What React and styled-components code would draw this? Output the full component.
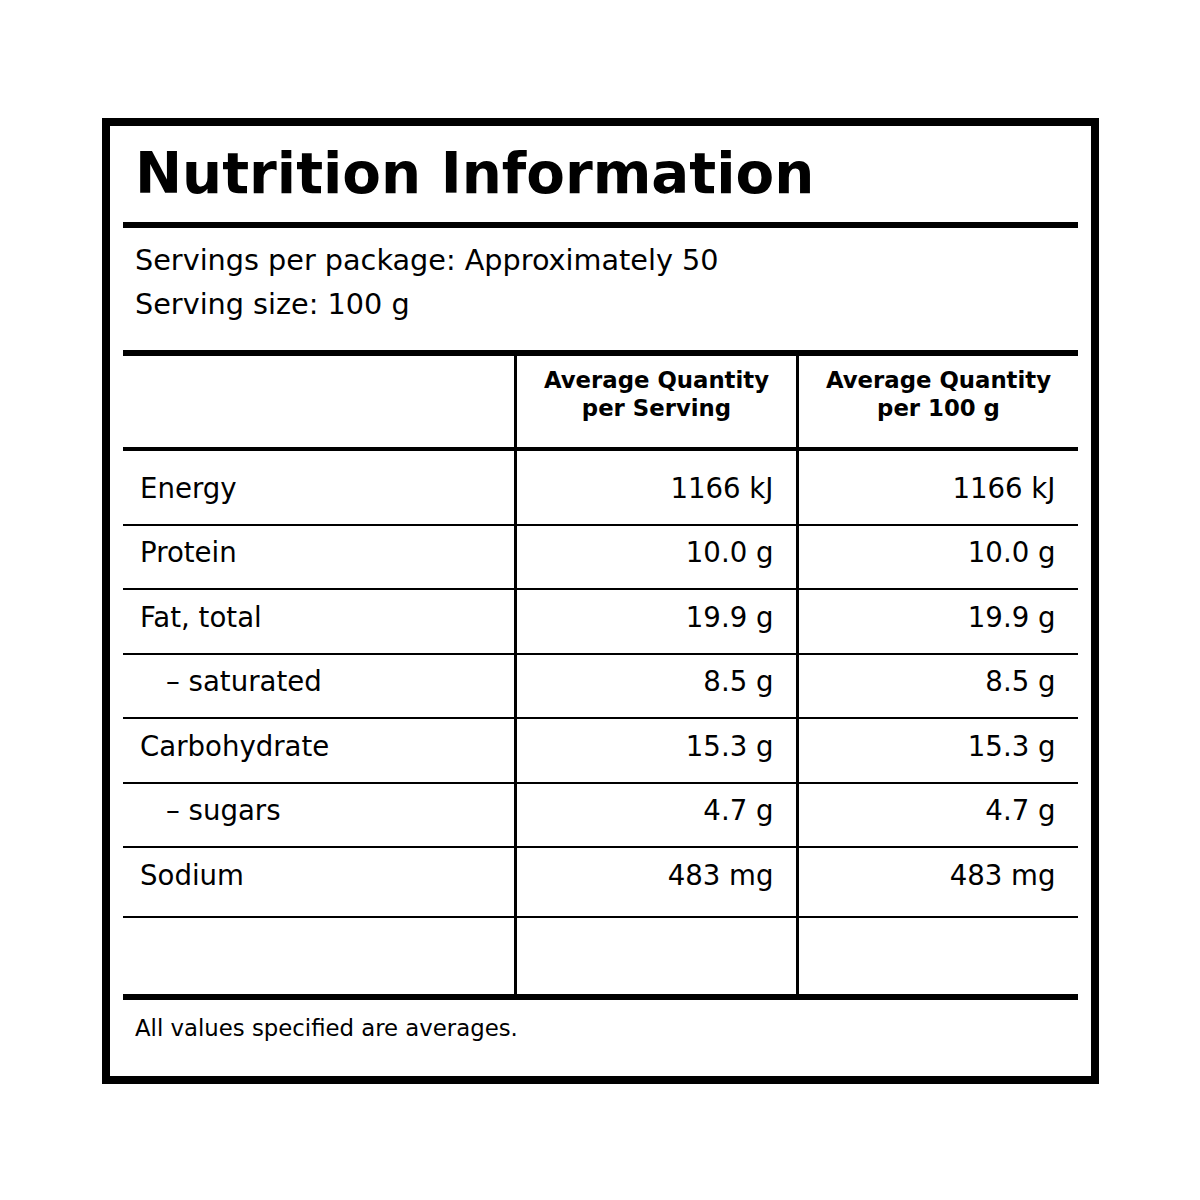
import React from "react";
import styled, { createGlobalStyle } from "styled-components";

const GlobalStyle = createGlobalStyle`
  body {
    margin: 0;
    background: #fff;
    color: #000;
    font-family: "DejaVu Sans", "Liberation Sans", sans-serif;
  }
`;

const Panel = styled.div`
  box-sizing: border-box;
  width: 997px;
  margin: 118px 0 0 102px;
  border: 8px solid #000;
  padding: 0 13px;
  background: #fff;
`;

const Title = styled.h1`
  margin: 0;
  padding: 16px 12px 15.5px;
  font-size: 56.3px;
  line-height: 64px;
  font-weight: 700;
`;

const Rule = styled.div`
  height: ${(p) => p.$h || 6}px;
  background: #000;
`;

const Servings = styled.div`
  padding: 10.5px 12px 24px;
  font-size: 28.7px;
  line-height: 44px;
`;

const Grid = styled.div`
  display: grid;
  grid-template-columns: 391px 282px 282px;
`;

const HeaderRow = styled(Grid)`
  height: 90.5px;
`;

const HeadCell = styled.div`
  box-sizing: border-box;
  padding-top: 9.5px;
  text-align: center;
  font-size: 22.8px;
  line-height: 28.5px;
  font-weight: 700;
  border-left: ${(p) => (p.$divider ? "3px solid #000" : "none")};
`;

const Row = styled(Grid)`
  border-bottom: 2px solid #000;
  font-size: 27.6px;
  line-height: 32px;

  & > div {
    padding-top: ${(p) => p.$top}px;
    padding-bottom: ${(p) => p.$bottom}px;
  }
`;

const EmptyRow = styled(Grid)`
  height: 76px;
`;

const Label = styled.div`
  box-sizing: border-box;
  padding-left: ${(p) => (p.$indent ? 43 : 17)}px;
`;

const Value = styled.div`
  box-sizing: border-box;
  padding-right: 22.5px;
  text-align: right;
  border-left: 3px solid #000;
`;

const Blank = styled.div`
  border-left: ${(p) => (p.$divider ? "3px solid #000" : "none")};
`;

const Footer = styled.div`
  padding: 13.6px 12px 34px;
  font-size: 22.8px;
  line-height: 28px;
`;

const nutrients = [
  { label: "Energy", serving: "1166 kJ", per100: "1166 kJ" },
  { label: "Protein", serving: "10.0 g", per100: "10.0 g" },
  { label: "Fat, total", serving: "19.9 g", per100: "19.9 g" },
  { label: "– saturated", serving: "8.5 g", per100: "8.5 g", indent: true },
  { label: "Carbohydrate", serving: "15.3 g", per100: "15.3 g" },
  { label: "– sugars", serving: "4.7 g", per100: "4.7 g", indent: true },
  { label: "Sodium", serving: "483 mg", per100: "483 mg" },
];

export default function App() {
  return (
    <>
      <GlobalStyle />
      <Panel>
        <Title>Nutrition Information</Title>
        <Rule />
        <Servings>
          <div>Servings per package: Approximately 50</div>
          <div>Serving size: 100 g</div>
        </Servings>
        <Rule />
        <HeaderRow>
          <HeadCell />
          <HeadCell $divider>
            Average Quantity
            <br />
            per Serving
          </HeadCell>
          <HeadCell $divider>
            Average Quantity
            <br />
            per 100 g
          </HeadCell>
        </HeaderRow>
        <Rule $h={4} />
        {nutrients.map((n, i) => (
          <Row
            key={n.label}
            $top={i === 0 ? 22.3 : 11.6}
            $bottom={i === nutrients.length - 1 ? 24.5 : 18.9}
          >
            <Label $indent={n.indent}>{n.label}</Label>
            <Value>{n.serving}</Value>
            <Value>{n.per100}</Value>
          </Row>
        ))}
        <EmptyRow>
          <Blank />
          <Blank $divider />
          <Blank $divider />
        </EmptyRow>
        <Rule />
        <Footer>All values specified are averages.</Footer>
      </Panel>
    </>
  );
}
